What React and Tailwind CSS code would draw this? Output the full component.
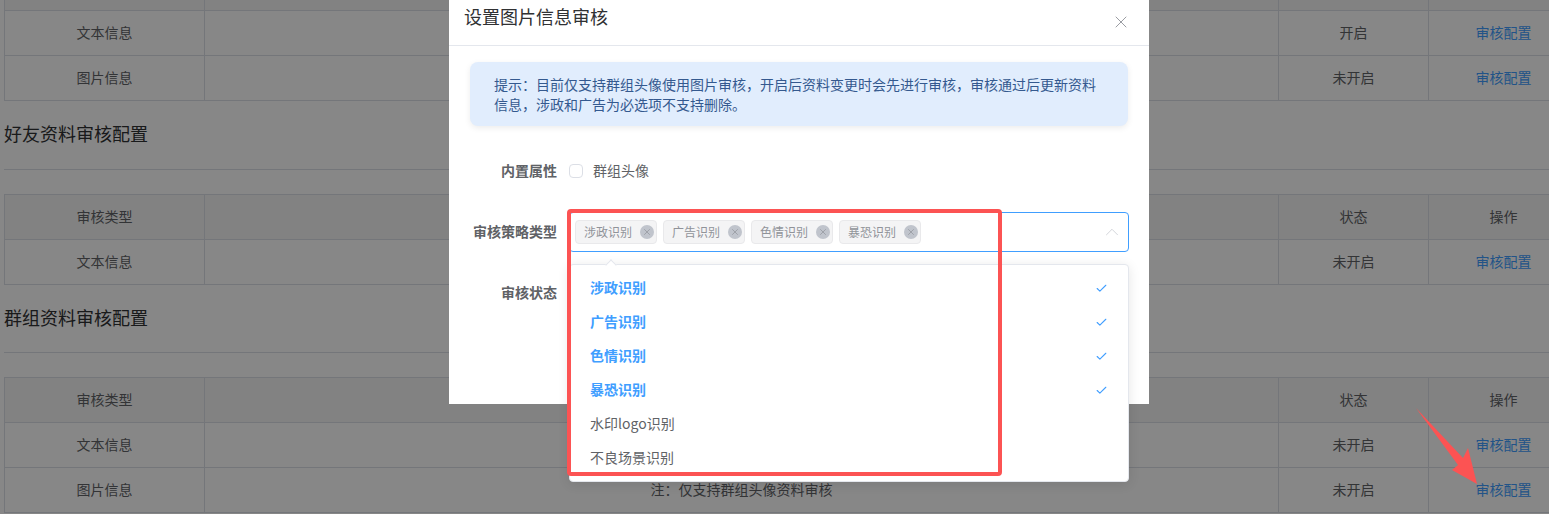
import React from 'react';
import { X, ChevronUp, Check } from 'lucide-react';

const cjk = { fontFamily: '"Noto Sans CJK SC", sans-serif' };

const sections = [
  {
    blankHeader: true,
    rows: [
      { type: '文本信息', note: '', status: '开启' },
      { type: '图片信息', note: '', status: '未开启' },
    ],
  },
  {
    title: '好友资料审核配置',
    height: 'h-[68px] pb-[4px]',
    rows: [{ type: '文本信息', note: '', status: '未开启' }],
  },
  {
    title: '群组资料审核配置',
    height: 'h-[67px] pb-[4px]',
    rows: [
      { type: '文本信息', note: '', status: '未开启' },
      { type: '图片信息', note: '注：仅支持群组头像资料审核', status: '未开启' },
    ],
  },
];

const tags = ['涉政识别', '广告识别', '色情识别', '暴恐识别'];
const options = [
  { label: '涉政识别', selected: true },
  { label: '广告识别', selected: true },
  { label: '色情识别', selected: true },
  { label: '暴恐识别', selected: true },
  { label: '水印logo识别' },
  { label: '不良场景识别' },
];

function ConfigTable({ rows, blankHeader }) {
  const cell = 'h-[45px] p-0 pb-[2px] border border-[#dcdfe6] text-center text-sm font-normal text-[#606266]';
  return (
    <table className="w-[1575px] table-fixed border-collapse">
      <colgroup>
        <col className="w-[200px]" />
        <col />
        <col className="w-[150px]" />
        <col className="w-[150px]" />
      </colgroup>
      <tbody>
        <tr className="bg-[#f5f5f5]">
          <th className={cell}>{!blankHeader && '审核类型'}</th>
          <th className={cell} />
          <th className={cell}>{!blankHeader && '状态'}</th>
          <th className={cell}>{!blankHeader && '操作'}</th>
        </tr>
        {rows.map((row, i) => (
          <tr key={i}>
            <td className={cell}>{row.type}</td>
            <td className={cell}>{row.note}</td>
            <td className={cell}>{row.status}</td>
            <td className={`${cell} !text-[#409eff]`}>审核配置</td>
          </tr>
        ))}
      </tbody>
    </table>
  );
}

function Tag({ label }) {
  return (
    <span className="flex h-6 w-[82px] items-center justify-between rounded border border-[#e9e9eb] bg-[#f4f4f5] pl-[8px] pr-[2px] text-xs text-[#909399]">
      {label}
      <span className="flex h-[14px] w-[14px] items-center justify-center rounded-full bg-[#c0c4cc]">
        <X size={10} strokeWidth={1.5} className="text-[#8a8d94]" />
      </span>
    </span>
  );
}

function Dialog() {
  return (
    <div className="absolute left-[449px] top-0 h-[404px] w-[700px] bg-white">
      <div className="flex h-[46px] justify-between border-b border-[#e4e7ed] pl-[15px] pr-[18px]">
        <h2 className="mt-[3px] text-lg leading-[26px] text-[#303133]">设置图片信息审核</h2>
        <X size={20} strokeWidth={1.1} className="mt-3 text-[#909399]" />
      </div>
      <div className="pl-[21px] pr-5 pt-4">
        <div className="h-16 w-[658px] rounded-lg bg-[#e1edfd] py-3 pl-6 pr-8 text-sm leading-5 text-[#34598f] shadow-[0_2px_6px_rgba(0,0,0,0.08)]">
          提示：目前仅支持群组头像使用图片审核，开启后资料变更时会先进行审核，审核通过后更新资料信息，涉政和广告为必选项不支持删除。
        </div>
        <div className="mt-[25px] flex h-10 items-center">
          <label className="w-[87px] pb-[2px] text-right text-sm font-bold text-[#606266]">内置属性</label>
          <span className="ml-3 h-[14px] w-[14px] rounded-sm border border-[#dcdfe6]" />
          <span className="ml-[10px] pb-[2px] text-sm text-[#606266]">群组头像</span>
        </div>
        <div className="mt-[21px] flex h-10 items-center">
          <label className="w-[87px] pb-[2px] text-right text-sm font-bold text-[#606266]">审核策略类型</label>
          <div className="ml-3 flex h-10 w-[560px] items-center justify-between rounded border border-[#409eff] pl-[5px] pr-[5px]">
            <div className="flex gap-[6px]">
              {tags.map(tag => <Tag key={tag} label={tag} />)}
            </div>
            <ChevronUp size={22} strokeWidth={0.9} className="text-[#c9ccd2]" />
          </div>
        </div>
        <div className="mt-[21px] flex h-10 items-center">
          <label className="w-[87px] pb-[2px] text-right text-sm font-bold text-[#606266]">审核状态</label>
        </div>
      </div>
    </div>
  );
}

function Dropdown() {
  return (
    <div className="absolute left-[569px] top-[264px] h-[218px] w-[560px] rounded border border-[#e4e7ed] bg-white py-[6px] shadow-[0_2px_12px_rgba(0,0,0,0.1)]">
      <span className="absolute left-[37px] top-[-4px] h-2 w-2 rotate-45 border-l border-t border-[#e4e7ed] bg-white" />
      {options.map(opt => (
        <div
          key={opt.label}
          className={`flex h-[34px] items-center justify-between pl-5 pr-5 text-sm ${opt.selected ? 'font-bold text-[#409eff]' : 'text-[#606266]'}`}
        >
          <span className="pb-[2px]">{opt.label}</span>
          {opt.selected && <Check size={13} strokeWidth={2} className="text-[#409eff]" />}
        </div>
      ))}
    </div>
  );
}

function Arrow() {
  return (
    <svg className="absolute left-[1405px] top-[400px]" width="90" height="100" viewBox="0 0 90 100">
      <path d="M11 8 L58 58 L63 48 L72 84 L47 70 L53 65 Z" fill="#fc5353" />
    </svg>
  );
}

export default function App() {
  return (
    <div className="relative h-[514px] w-full overflow-hidden bg-white" style={cjk}>
      <div className="-mt-[35px] pl-1">
        {sections.map((s, i) => (
          <section key={i}>
            {s.title && (
              <>
                <div className={`flex items-center text-lg text-[#303133] ${s.height}`}>{s.title}</div>
                <div className="mb-6 h-px w-[1575px] bg-[#dcdfe6]" />
              </>
            )}
            <ConfigTable rows={s.rows} blankHeader={s.blankHeader} />
          </section>
        ))}
      </div>
      <div className="absolute inset-0 bg-black/[.47]" />
      <Dialog />
      <Dropdown />
      <div className="absolute left-[567px] top-[209px] h-[267px] w-[435px] rounded-sm border-4 border-[#fc5353]" />
      <Arrow />
    </div>
  );
}
